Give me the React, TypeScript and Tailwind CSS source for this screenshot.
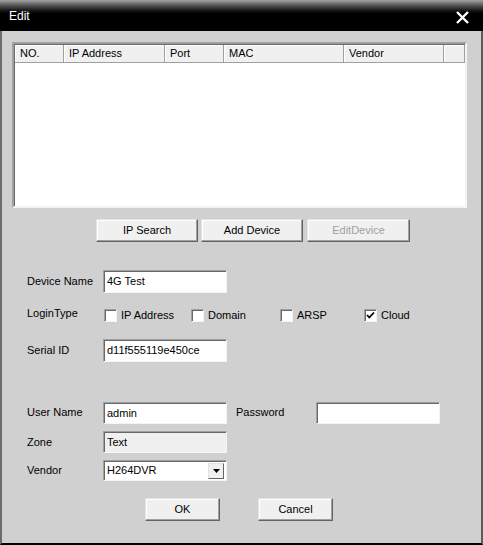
import React from "react";

const font = { fontFamily: '"Liberation Sans", Arial, sans-serif' };

const columns = [
  { label: "NO.", w: "w-[49px]" },
  { label: "IP Address", w: "w-[101px]" },
  { label: "Port", w: "w-[59px]" },
  { label: "MAC", w: "w-[120px]" },
  { label: "Vendor", w: "w-[100px]" },
  { label: "", w: "flex-1" },
];

function Button({ label, className = "", disabled = false }: { label: string; className?: string; disabled?: boolean }) {
  return (
    <div
      className={`flex h-[23px] items-center justify-center bg-[#f0f0f0] border border-t-[#e3e3e3] border-l-[#e3e3e3] border-r-[#646464] border-b-[#646464] shadow-[inset_-1px_-1px_0_#a0a0a0,inset_1px_1px_0_#ffffff] text-[11px] ${
        disabled ? "text-[#a0a0a0]" : "text-black"
      } ${className}`}
    >
      {label}
    </div>
  );
}

function Input({ value = "", w = "w-[124px]", h = "h-[23px]", disabled = false }: { value?: string; w?: string; h?: string; disabled?: boolean }) {
  return (
    <div
      className={`${w} ${h} flex items-center pl-[3px] border border-t-[#a0a0a0] border-l-[#a0a0a0] border-r-[#f4f4f4] border-b-[#f4f4f4] shadow-[inset_1px_1px_0_#696969] text-[11px] text-black ${
        disabled ? "bg-[#f0f0f0] items-start pt-[2px]" : "bg-white"
      }`}
    >
      {value}
    </div>
  );
}

function Check({ label, checked = false, w }: { label: string; checked?: boolean; w: string }) {
  return (
    <div className={`flex items-center ${w}`}>
      <div className="w-[13px] h-[13px] bg-white border border-t-[#a0a0a0] border-l-[#a0a0a0] border-r-[#f4f4f4] border-b-[#f4f4f4] shadow-[inset_1px_1px_0_#696969] flex items-center justify-center">
        {checked && (
          <svg width="9" height="9" viewBox="0 0 9 9">
            <path d="M1 4 L3.3 6.5 L8 1.5" stroke="#000" strokeWidth="1.8" fill="none" />
          </svg>
        )}
      </div>
      <span className="ml-[4px] text-[11px] text-black">{label}</span>
    </div>
  );
}

export default function App() {
  return (
    <div className="w-[483px] h-[545px] flex flex-col" style={font}>
      <div className="h-[31px] flex items-center justify-between bg-[linear-gradient(to_bottom,#a4a4a4_0px,#5a5a5a_5px,#111111_11px,#000000_14px,#000000_31px)]">
        <span className="ml-[9px] text-[12px] text-white">Edit</span>
        <svg className="mr-[14px] mt-[4px]" width="13" height="13" viewBox="0 0 13 13">
          <path d="M1 1 L12 12 M12 1 L1 12" stroke="#fff" strokeWidth="2.4" />
        </svg>
      </div>

      <div className="flex-1 flex flex-col bg-[#d0d0d0] border-l-2 border-l-[#6c6c6c] border-r-2 border-r-[#5c5c5c] border-b-2 border-b-black">
        {/* device list */}
        <div className="ml-[10px] mt-[11px] w-[455px] h-[166px] bg-white border-2 border-t-[#a0a0a0] border-l-[#a0a0a0] border-r-[#f4f4f4] border-b-[#f4f4f4] shadow-[inset_1px_1px_0_#696969]">
          <div className="flex h-[18px] mt-[1px] ml-[1px]">
            {columns.map((c, i) => (
              <div
                key={i}
                className={`${c.w} h-full flex items-center pl-[5px] bg-[#f0f0f0] border-r border-r-[#a0a0a0] border-b border-b-[#a0a0a0] shadow-[inset_1px_1px_0_#ffffff] text-[11px] text-black`}
              >
                {c.label}
              </div>
            ))}
          </div>
        </div>

        <div className="flex mt-[11px]">
          <Button label="IP Search" className="ml-[94px] w-[102px]" />
          <Button label="Add Device" className="ml-[3px] w-[102px]" />
          <Button label="EditDevice" className="ml-[4px] w-[103px]" disabled />
        </div>

        <div className="flex items-center mt-[28px] pl-[25px] text-[11px] text-black">
          <span className="w-[76px]">Device Name</span>
          <Input value="4G Test" />
        </div>

        <div className="flex items-center mt-[16px] h-[13px] pl-[25px] text-[11px] text-black">
          <span className="w-[77px] -mt-[4px]">LoginType</span>
          <Check label="IP Address" w="w-[87px]" />
          <Check label="Domain" w="w-[89px]" />
          <Check label="ARSP" w="w-[84px]" />
          <Check label="Cloud" checked w="w-[60px]" />
        </div>

        <div className="flex items-center mt-[17px] pl-[25px] text-[11px] text-black">
          <span className="w-[76px]">Serial ID</span>
          <Input value="d11f555119e450ce" />
        </div>

        <div className="flex items-center mt-[40px] pl-[25px] text-[11px] text-black">
          <span className="w-[76px] -mt-[2px]">User Name</span>
          <Input value="admin" h="h-[22px]" />
          <span className="ml-[9px] w-[80px] -mt-[2px]">Password</span>
          <Input w="w-[124px]" h="h-[22px]" />
        </div>

        <div className="flex items-center mt-[7px] pl-[25px] text-[11px] text-black">
          <span className="w-[76px]">Zone</span>
          <Input value="Text" h="h-[22px]" disabled />
        </div>

        <div className="flex items-center mt-[7px] pl-[25px] text-[11px] text-black">
          <span className="w-[76px] -mt-[1px]">Vendor</span>
          <div className="w-[124px] h-[21px] flex items-center justify-between pl-[3px] pr-[2px] bg-white border border-t-[#a0a0a0] border-l-[#a0a0a0] border-r-[#f4f4f4] border-b-[#f4f4f4] shadow-[inset_1px_1px_0_#696969]">
            <span>H264DVR</span>
            <div className="w-[16px] h-[16px] flex items-center justify-center bg-[#f0f0f0] border border-t-[#e3e3e3] border-l-[#e3e3e3] border-r-[#646464] border-b-[#646464]">
              <svg width="7" height="4" viewBox="0 0 7 4">
                <path d="M0 0 H7 L3.5 4 Z" fill="#000" />
              </svg>
            </div>
          </div>
        </div>

        <div className="flex mt-[17px]">
          <Button label="OK" className="ml-[143px] w-[75px]" />
          <Button label="Cancel" className="ml-[38px] w-[75px]" />
        </div>
      </div>
    </div>
  );
}
